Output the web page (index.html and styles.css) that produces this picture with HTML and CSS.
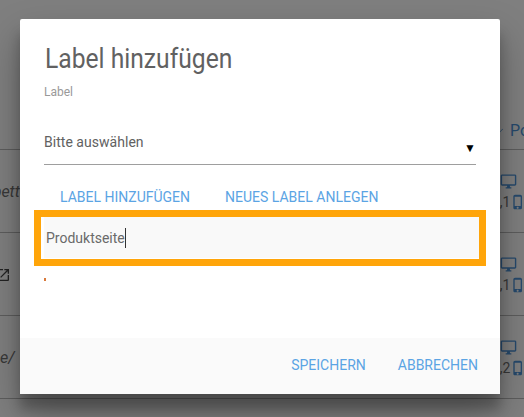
FILE: index.html
```html
<!DOCTYPE html>
<html lang="de">
<head>
<meta charset="utf-8">
<title>Label hinzufügen</title>
<link rel="stylesheet" href="styles.css">
</head>
<body>
<div class="page">
  <div class="row row-head">
    <span class="cut"></span>
    <span class="head-link">
      <svg class="ic-check" viewBox="0 0 24 24"><path d="M9 16.17L4.83 12l-1.42 1.41L9 19 21 7l-1.41-1.41z"/></svg>
      Po
    </span>
  </div>
  <div class="row">
    <span class="cut cut-end"><em>bette</em></span>
    <span class="stats">
      <svg class="ic-desktop" viewBox="0 0 24 24"><path d="M21 2H3c-1.1 0-2 .9-2 2v12c0 1.1.9 2 2 2h7v2H8v2h8v-2h-2v-2h7c1.1 0 2-.9 2-2V4c0-1.1-.9-2-2-2zm0 14H3V4h18v12z"/></svg>
      <span class="stat-line">4,1<svg class="ic-phone" viewBox="0 0 24 24"><path d="M15.5 1h-8C6.12 1 5 2.12 5 3.5v17C5 21.88 6.12 23 7.5 23h8c1.38 0 2.5-1.12 2.5-2.5v-17C18 2.12 16.88 1 15.5 1zm-4 21c-.83 0-1.5-.67-1.5-1.5s.67-1.5 1.5-1.5 1.5.67 1.5 1.5-.67 1.5-1.5 1.5zm4.5-4H7V4h9v14z"/></svg></span>
    </span>
  </div>
  <div class="row">
    <span class="cut"><svg class="ic-open" viewBox="0 0 24 24"><path d="M19 19H5V5h7V3H5c-1.11 0-2 .9-2 2v14c0 1.1.89 2 2 2h14c1.1 0 2-.9 2-2v-7h-2v7zM14 3v2h3.59l-9.83 9.83 1.41 1.41L19 6.41V10h2V3h-7z"/></svg></span>
    <span class="stats">
      <svg class="ic-desktop" viewBox="0 0 24 24"><path d="M21 2H3c-1.1 0-2 .9-2 2v12c0 1.1.9 2 2 2h7v2H8v2h8v-2h-2v-2h7c1.1 0 2-.9 2-2V4c0-1.1-.9-2-2-2zm0 14H3V4h18v12z"/></svg>
      <span class="stat-line">3,1<svg class="ic-phone" viewBox="0 0 24 24"><path d="M15.5 1h-8C6.12 1 5 2.12 5 3.5v17C5 21.88 6.12 23 7.5 23h8c1.38 0 2.5-1.12 2.5-2.5v-17C18 2.12 16.88 1 15.5 1zm-4 21c-.83 0-1.5-.67-1.5-1.5s.67-1.5 1.5-1.5 1.5.67 1.5 1.5-.67 1.5-1.5 1.5zm4.5-4H7V4h9v14z"/></svg></span>
    </span>
  </div>
  <div class="row">
    <span class="cut"><em>e/</em><i class="square"></i></span>
    <span class="stats">
      <svg class="ic-desktop" viewBox="0 0 24 24"><path d="M21 2H3c-1.1 0-2 .9-2 2v12c0 1.1.9 2 2 2h7v2H8v2h8v-2h-2v-2h7c1.1 0 2-.9 2-2V4c0-1.1-.9-2-2-2zm0 14H3V4h18v12z"/></svg>
      <span class="stat-line">5,2<svg class="ic-phone" viewBox="0 0 24 24"><path d="M15.5 1h-8C6.12 1 5 2.12 5 3.5v17C5 21.88 6.12 23 7.5 23h8c1.38 0 2.5-1.12 2.5-2.5v-17C18 2.12 16.88 1 15.5 1zm-4 21c-.83 0-1.5-.67-1.5-1.5s.67-1.5 1.5-1.5 1.5.67 1.5 1.5-.67 1.5-1.5 1.5zm4.5-4H7V4h9v14z"/></svg></span>
    </span>
  </div>
</div>
<div class="overlay"></div>
<section class="dialog">
  <div class="dialog-body">
    <h1 class="title">Label hinzufügen</h1>
    <div class="field-label">Label</div>
    <div class="select"><span>Bitte auswählen</span><span class="arrow">▼</span></div>
    <div class="tabs">
      <span class="btn">LABEL HINZUFÜGEN</span>
      <span class="btn">NEUES LABEL ANLEGEN</span>
    </div>
    <div class="highlight">
      <div class="input"><span class="value">Produktseite</span></div>
    </div>
    <div class="error-mark"></div>
  </div>
  <footer class="dialog-footer">
    <span class="btn">SPEICHERN</span>
    <span class="btn">ABBRECHEN</span>
  </footer>
</section>
</body>
</html>
```
FILE: styles.css
```css
html, body {
  margin: 0;
  height: 100%;
  overflow: hidden;
  background: #fff;
  font-family: Roboto, "Liberation Sans", sans-serif;
}
.page {
  width: 524px;
  height: 417px;
  overflow: hidden;
  color: #707070;
  font-size: 14px;
}
.row {
  height: 83px;
  box-sizing: border-box;
  border-bottom: 1px solid #bbb;
  display: flex;
  justify-content: space-between;
  align-items: center;
}
.row-head {
  height: 150px;
  align-items: flex-end;
  padding-bottom: 9px;
}
.cut {
  width: 40px;
  display: flex;
  justify-content: flex-start;
  align-items: center;
  overflow: hidden;
  white-space: nowrap;
  font-size: 16px;
}
.cut-end { width: 28px; justify-content: flex-end; }
.square {
  width: 12px;
  height: 12px;
  margin-left: 6px;
  background: #444;
  flex: none;
}
.head-link {
  width: 28px;
  flex: none;
  display: flex;
  align-items: center;
  gap: 6px;
  white-space: nowrap;
  color: #4c93d8;
  font-size: 16px;
}
.ic-check { width: 8px; height: 8px; fill: #4c93d8; flex: none; }
.stats {
  width: 24px;
  flex: none;
  display: flex;
  flex-direction: column;
  align-items: flex-start;
  gap: 4px;
}
.stat-line {
  display: flex;
  align-items: center;
  font-size: 14px;
  margin-left: -8px;
}
.ic-desktop { width: 17px; height: 17px; fill: #4c93d8; }
.ic-phone { width: 16px; height: 16px; fill: #4c93d8; margin-left: -1px; }
.ic-open { width: 16px; height: 16px; fill: #444; margin: 2px 0 0 -5px; }

.overlay {
  position: absolute;
  inset: 0;
  background: rgba(0, 0, 0, .5);
}
.dialog {
  position: absolute;
  left: 20px;
  top: 19px;
  width: 480px;
  height: 375px;
  display: flex;
  flex-direction: column;
  background: #fff;
  border-radius: 2px;
  box-shadow: 0 19px 38px rgba(0, 0, 0, .3), 0 15px 12px rgba(0, 0, 0, .22);
}
.dialog-body {
  flex: 1;
  padding: 0 14px;
  display: flex;
  flex-direction: column;
}
.title {
  margin: 22px 10px 0 11px;
  height: 36px;
  line-height: 36px;
  font-size: 28px;
  font-weight: 400;
  color: #616161;
  white-space: nowrap;
  transform: scaleX(.88);
  transform-origin: left center;
}
.field-label {
  margin: 8px 10px 0;
  height: 14px;
  line-height: 14px;
  font-size: 12px;
  color: #999;
}
.select {
  margin: 32px 10px 0;
  height: 34px;
  box-sizing: border-box;
  padding-top: 1px;
  border-bottom: 1px solid #9e9e9e;
  display: flex;
  justify-content: space-between;
  font-size: 14px;
  letter-spacing: .03px;
  line-height: 20px;
  color: #616161;
}
.arrow {
  font-size: 12px;
  line-height: 32px;
  color: #000;
}
.tabs {
  margin: 18px 10px 0;
  padding: 0 0 0 16px;
  display: flex;
  gap: 35px;
  height: 28px;
  align-items: center;
}
.btn {
  font-size: 14px;
  line-height: 20px;
  color: #5ba4e4;
  white-space: nowrap;
}
.highlight {
  margin-top: -1px;
  height: 56px;
  box-sizing: border-box;
  border: 7px solid #ffa50a;
  padding: 0 0 0 3px;
}
.input {
  height: 41px;
  background: #f9f9f9;
  display: flex;
  align-items: center;
  padding-left: 2px;
  font-size: 14px;
  color: #6a6a6a;
}
.value {
  border-right: 1px solid #333;
  line-height: 20px;
}
.error-mark {
  margin: 12px 0 0 10px;
  width: 2px;
  height: 3px;
  background: #d9793a;
}
.dialog-footer {
  height: 56px;
  box-sizing: border-box;
  padding: 0 22px 2px 0;
  background: #fafafa;
  display: flex;
  justify-content: flex-end;
  align-items: center;
  gap: 32px;
}
```
